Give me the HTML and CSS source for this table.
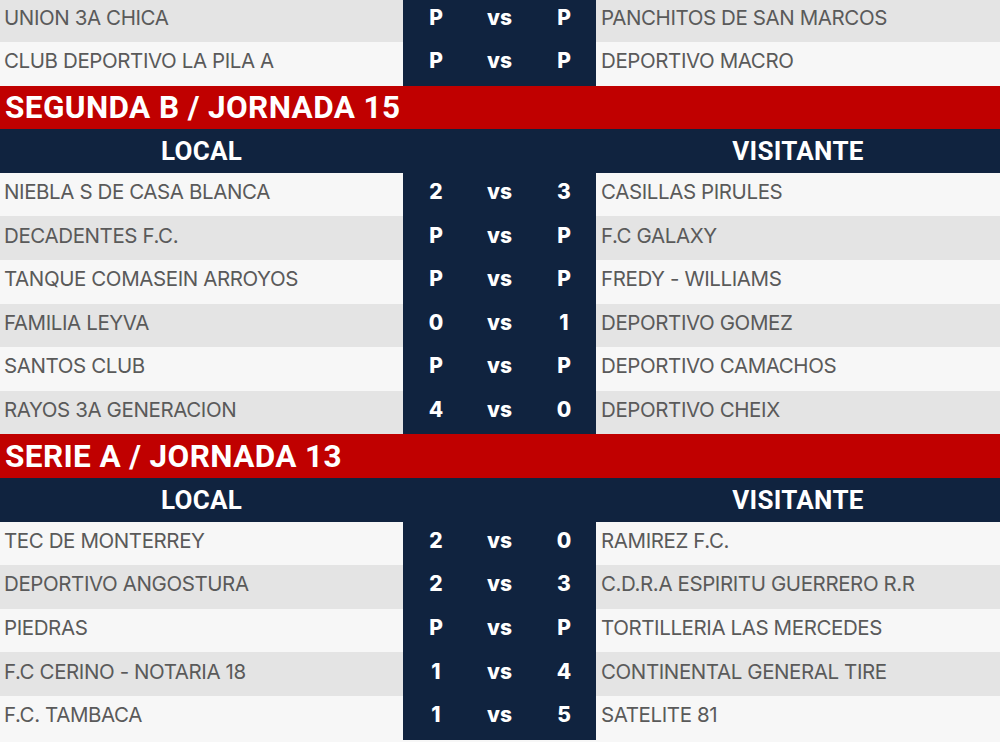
FILE: index.html
```html
<!DOCTYPE html>
<html lang="es">
<head>
<meta charset="utf-8">
<title>Resultados</title>
<link rel="stylesheet" href="styles.css">
</head>
<body>
<div class="board">
  <div class="row even"><div class="team">UNION 3A CHICA</div><div class="score"><span>P</span><span>vs</span><span>P</span></div><div class="team away">PANCHITOS DE SAN MARCOS</div></div>
  <div class="row odd"><div class="team">CLUB DEPORTIVO LA PILA A</div><div class="score"><span>P</span><span>vs</span><span>P</span></div><div class="team away">DEPORTIVO MACRO</div></div>

  <div class="title">SEGUNDA B / JORNADA 15</div>
  <div class="colhead"><div class="ch">LOCAL</div><div class="chmid"></div><div class="ch">VISITANTE</div></div>
  <div class="row odd"><div class="team">NIEBLA S DE CASA BLANCA</div><div class="score"><span>2</span><span>vs</span><span>3</span></div><div class="team away">CASILLAS PIRULES</div></div>
  <div class="row even"><div class="team">DECADENTES F.C.</div><div class="score"><span>P</span><span>vs</span><span>P</span></div><div class="team away">F.C GALAXY</div></div>
  <div class="row odd"><div class="team">TANQUE COMASEIN ARROYOS</div><div class="score"><span>P</span><span>vs</span><span>P</span></div><div class="team away">FREDY - WILLIAMS</div></div>
  <div class="row even"><div class="team">FAMILIA LEYVA</div><div class="score"><span>0</span><span>vs</span><span>1</span></div><div class="team away">DEPORTIVO GOMEZ</div></div>
  <div class="row odd"><div class="team">SANTOS CLUB</div><div class="score"><span>P</span><span>vs</span><span>P</span></div><div class="team away">DEPORTIVO CAMACHOS</div></div>
  <div class="row even"><div class="team">RAYOS 3A GENERACION</div><div class="score"><span>4</span><span>vs</span><span>0</span></div><div class="team away">DEPORTIVO CHEIX</div></div>

  <div class="title">SERIE A / JORNADA 13</div>
  <div class="colhead"><div class="ch">LOCAL</div><div class="chmid"></div><div class="ch">VISITANTE</div></div>
  <div class="row odd"><div class="team">TEC DE MONTERREY</div><div class="score"><span>2</span><span>vs</span><span>0</span></div><div class="team away">RAMIREZ F.C.</div></div>
  <div class="row even"><div class="team">DEPORTIVO ANGOSTURA</div><div class="score"><span>2</span><span>vs</span><span>3</span></div><div class="team away">C.D.R.A ESPIRITU GUERRERO R.R</div></div>
  <div class="row odd"><div class="team">PIEDRAS</div><div class="score"><span>P</span><span>vs</span><span>P</span></div><div class="team away">TORTILLERIA LAS MERCEDES</div></div>
  <div class="row even"><div class="team">F.C CERINO - NOTARIA 18</div><div class="score"><span>1</span><span>vs</span><span>4</span></div><div class="team away">CONTINENTAL GENERAL TIRE</div></div>
  <div class="row odd"><div class="team">F.C. TAMBACA</div><div class="score"><span>1</span><span>vs</span><span>5</span></div><div class="team away">SATELITE 81</div></div>
</div>
</body>
</html>
```

FILE: styles.css
```css
html, body {
  margin: 0;
  padding: 0;
  background: #f7f7f7;
}
body {
  width: 1000px;
  height: 742px;
  overflow: hidden;
}
.board {
  margin-top: -1.6px;
  display: flex;
  flex-direction: column;
}
.row {
  height: 43.6px;
  display: grid;
  grid-template-columns: 403px 193px 1fr;
}
.row.even { background: #e4e4e4; }
.row.odd { background: #f7f7f7; }
.team {
  font-family: "Inter", "Open Sans", sans-serif;
  font-size: 20.5px;
  letter-spacing: -0.4px;
  color: #5a5a5a;
  display: flex;
  align-items: center;
  padding-left: 4px;
  padding-bottom: 6px;
  white-space: nowrap;
  overflow: hidden;
}
.team.away { padding-left: 5px; }
.score {
  background: #10233f;
  display: grid;
  grid-template-columns: 64px 65px 64px;
  align-items: center;
  padding-bottom: 6px;
}
.score span {
  font-family: "Inter", "Open Sans", sans-serif;
  font-weight: 800;
  font-size: 21px;
  color: #ffffff;
  text-align: center;
}
.score span:first-child { padding-left: 2px; }
.title {
  height: 43.6px;
  background: #c00000;
  color: #ffffff;
  font-family: "Roboto", sans-serif;
  font-weight: 700;
  font-size: 31.5px;
  letter-spacing: 0.4px;
  display: flex;
  align-items: center;
  padding-left: 5px;
}
.colhead {
  height: 43.6px;
  background: #10233f;
  display: grid;
  grid-template-columns: 403px 193px 1fr;
  align-items: center;
}
.ch {
  color: #ffffff;
  font-family: "Roboto", sans-serif;
  font-weight: 700;
  font-size: 26px;
  letter-spacing: 0.3px;
  text-align: center;
}
```
